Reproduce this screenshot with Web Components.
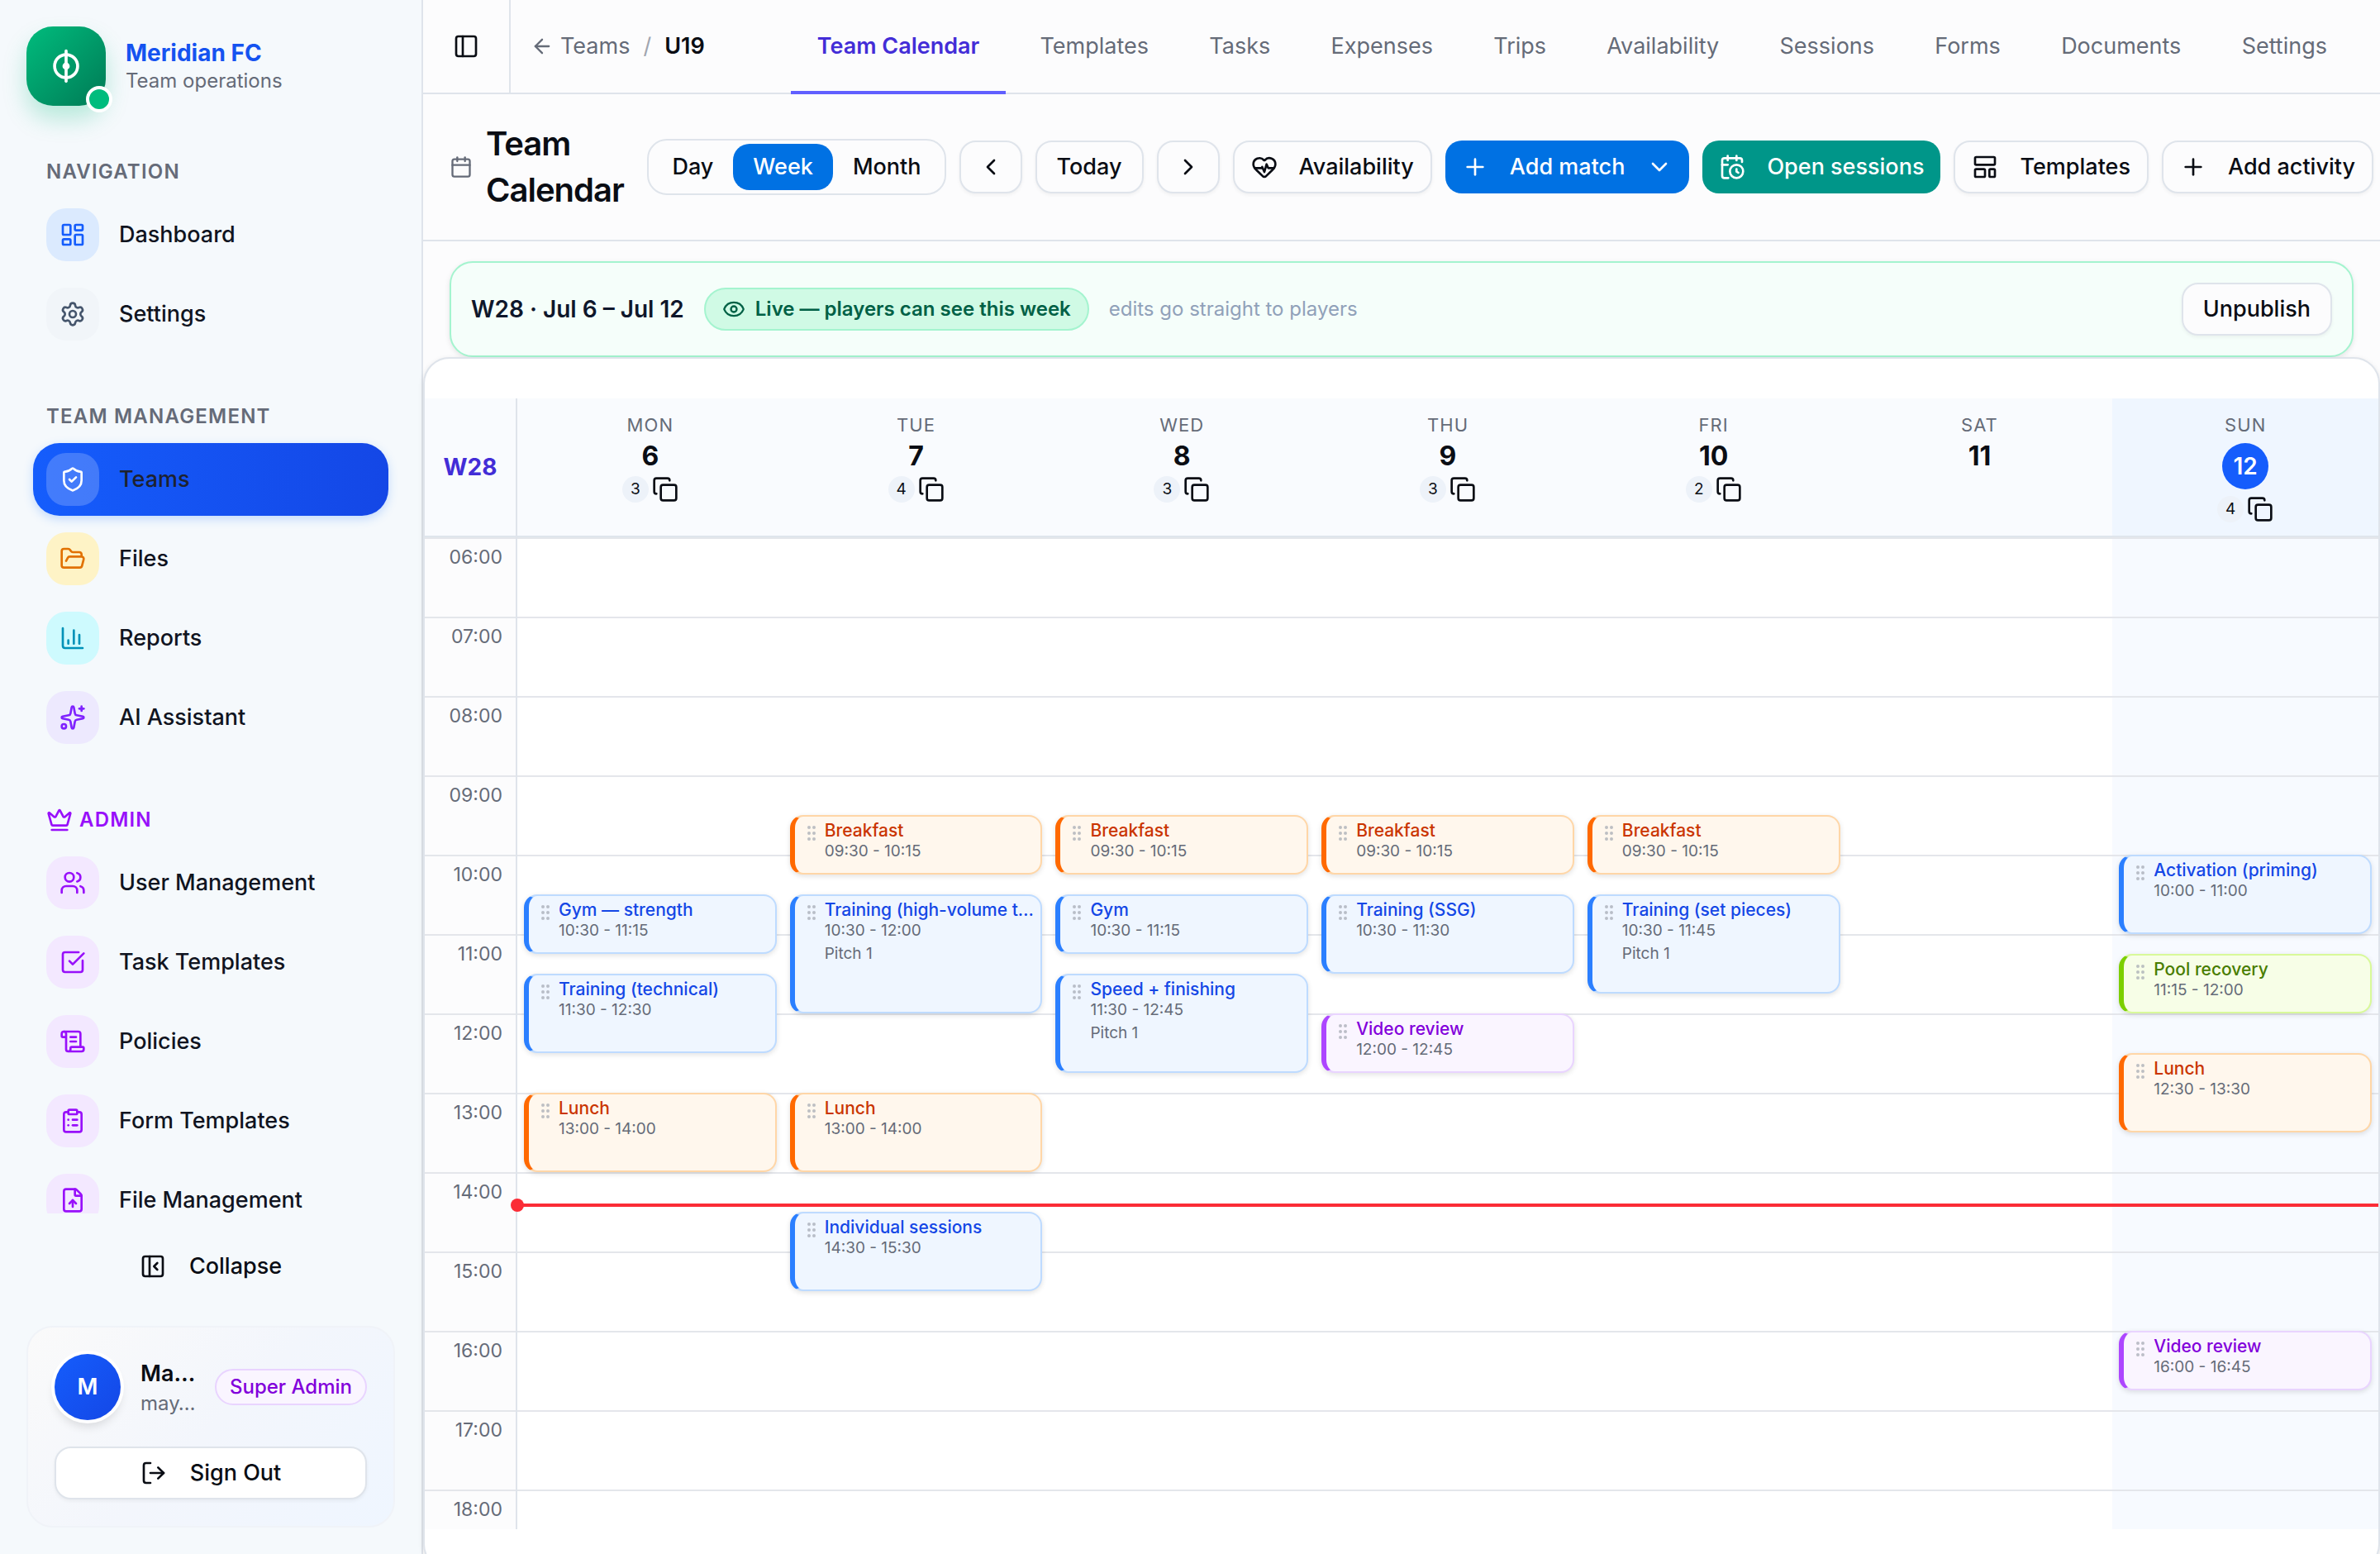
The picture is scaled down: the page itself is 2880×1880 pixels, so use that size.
<!DOCTYPE html>
<html lang="en">
<head>
<meta charset="utf-8">
<title>Team Calendar</title>
<style>
  :root {
    --fg: #0a0d14;
    --muted: #656b78;
    --border: #dfe4eb;
    --line: #e4e6eb;
    --page: #fcfcfd;
    --blue: #155dfc;
    --indigo: #432dd7;
  }

  body {
    margin: 0;
    color: var(--fg);
    background: var(--page);
    font-family: Inter, "Liberation Sans", sans-serif;
    font-size: 27px;
    line-height: 40px;
    font-optical-sizing: none;
  }
</style>
</head>
<body>
<team-app></team-app>

<script>
const icons = {
  dashboard: '<rect width="7" height="9" x="3" y="3" rx="1"/><rect width="7" height="5" x="14" y="3" rx="1"/><rect width="7" height="9" x="14" y="12" rx="1"/><rect width="7" height="5" x="3" y="16" rx="1"/>',
  settings: '<path d="M9.671 4.136a2.34 2.34 0 0 1 4.659 0 2.34 2.34 0 0 0 3.319 1.915 2.34 2.34 0 0 1 2.33 4.033 2.34 2.34 0 0 0 0 3.831 2.34 2.34 0 0 1-2.33 4.033 2.34 2.34 0 0 0-3.319 1.915 2.34 2.34 0 0 1-4.659 0 2.34 2.34 0 0 0-3.32-1.915 2.34 2.34 0 0 1-2.33-4.033 2.34 2.34 0 0 0 0-3.831A2.34 2.34 0 0 1 6.35 6.051a2.34 2.34 0 0 0 3.319-1.915"/><circle cx="12" cy="12" r="3"/>',
  shield: '<path d="M20 13c0 5-3.5 7.5-7.66 8.95a1 1 0 0 1-.67-.01C7.5 20.5 4 18 4 13V6a1 1 0 0 1 1-1c2 0 4.5-1.2 6.24-2.72a1.17 1.17 0 0 1 1.52 0C14.51 3.81 17 5 19 5a1 1 0 0 1 1 1z"/><path d="m9 12 2 2 4-4"/>',
  folder: '<path d="m6 14 1.5-2.9A2 2 0 0 1 9.24 10H20a2 2 0 0 1 1.94 2.5l-1.54 6a2 2 0 0 1-1.95 1.5H4a2 2 0 0 1-2-2V5a2 2 0 0 1 2-2h3.9a2 2 0 0 1 1.69.9l.81 1.2a2 2 0 0 0 1.67.9H18a2 2 0 0 1 2 2v2"/>',
  chart: '<path d="M3 3v16a2 2 0 0 0 2 2h16"/><path d="M18 17V9"/><path d="M13 17V5"/><path d="M8 17v-3"/>',
  sparkles: '<path d="M11.017 2.814a1 1 0 0 1 1.966 0l1.051 5.558a2 2 0 0 0 1.594 1.594l5.558 1.051a1 1 0 0 1 0 1.966l-5.558 1.051a2 2 0 0 0-1.594 1.594l-1.051 5.558a1 1 0 0 1-1.966 0l-1.051-5.558a2 2 0 0 0-1.594-1.594l-5.558-1.051a1 1 0 0 1 0-1.966l5.558-1.051a2 2 0 0 0 1.594-1.594z"/><path d="M20 2v4"/><path d="M22 4h-4"/><circle cx="4" cy="20" r="2"/>',
  crown: '<path d="M11.562 3.266a.5.5 0 0 1 .876 0L15.39 8.87a1 1 0 0 0 1.516.294L21.183 5.5a.5.5 0 0 1 .798.519l-2.834 10.246a1 1 0 0 1-.956.734H5.81a1 1 0 0 1-.957-.734L2.02 6.02a.5.5 0 0 1 .798-.519l4.276 3.664a1 1 0 0 0 1.516-.294z"/><path d="M5 21h14"/>',
  users: '<path d="M16 21v-2a4 4 0 0 0-4-4H6a4 4 0 0 0-4 4v2"/><circle cx="9" cy="7" r="4"/><path d="M22 21v-2a4 4 0 0 0-3-3.87"/><path d="M16 3.13a4 4 0 0 1 0 7.75"/>',
  check: '<path d="M21 10.656V19a2 2 0 0 1-2 2H5a2 2 0 0 1-2-2V5a2 2 0 0 1 2-2h12.344"/><path d="m9 11 3 3L22 4"/>',
  scroll: '<path d="M15 12h-5"/><path d="M15 8h-5"/><path d="M19 17V5a2 2 0 0 0-2-2H4"/><path d="M8 21h12a2 2 0 0 0 2-2v-1a1 1 0 0 0-1-1H11a1 1 0 0 0-1 1v1a2 2 0 1 1-4 0V5a2 2 0 1 0-4 0v2a1 1 0 0 0 1 1h3"/>',
  clipboard: '<rect width="8" height="4" x="8" y="2" rx="1"/><path d="M16 4h2a2 2 0 0 1 2 2v14a2 2 0 0 1-2 2H6a2 2 0 0 1-2-2V6a2 2 0 0 1 2-2h2"/><path d="M12 11h4"/><path d="M12 16h4"/><path d="M8 11h.01"/><path d="M8 16h.01"/>',
  fileup: '<path d="M6 22a2 2 0 0 1-2-2V4a2 2 0 0 1 2-2h8a2.4 2.4 0 0 1 1.704.706l3.588 3.588A2.4 2.4 0 0 1 20 8v12a2 2 0 0 1-2 2z"/><path d="M14 2v5a1 1 0 0 0 1 1h5"/><path d="M12 12v6"/><path d="m15 15-3-3-3 3"/>',
  collapse: '<rect width="18" height="18" x="3" y="3" rx="2"/><path d="M9 3v18"/><path d="m16 15-3-3 3-3"/>',
  panel: '<rect width="18" height="18" x="3" y="3" rx="2"/><path d="M9 3v18"/>',
  logout: '<path d="m16 17 5-5-5-5"/><path d="M21 12H9"/><path d="M9 21H5a2 2 0 0 1-2-2V5a2 2 0 0 1 2-2h4"/>',
  back: '<path d="m12 19-7-7 7-7"/><path d="M19 12H5"/>',
  calendar: '<path d="M8 2v4"/><path d="M16 2v4"/><rect width="18" height="18" x="3" y="4" rx="2"/><path d="M3 10h18"/>',
  left: '<path d="m15 18-6-6 6-6"/>',
  right: '<path d="m9 18 6-6-6-6"/>',
  down: '<path d="m6 9 6 6 6-6"/>',
  plus: '<path d="M5 12h14"/><path d="M12 5v14"/>',
  heart: '<path d="M2 9.5a5.5 5.5 0 0 1 9.591-3.676.56.56 0 0 0 .818 0A5.49 5.49 0 0 1 22 9.5c0 2.29-1.5 4-3 5.5l-5.492 5.313a2 2 0 0 1-3 .019L5 15c-1.5-1.5-3-3.2-3-5.5"/><path d="M3.22 13H9.5l.5-1 2 4.5 2-7 1.5 3.5h5.27"/>',
  clock: '<path d="M16 14v2.2l1.6 1"/><path d="M16 2v4"/><path d="M21 7.5V6a2 2 0 0 0-2-2H5a2 2 0 0 0-2 2v14a2 2 0 0 0 2 2h3.5"/><path d="M3 10h5"/><path d="M8 2v4"/><circle cx="16" cy="16" r="6"/>',
  template: '<rect width="18" height="7" x="3" y="3" rx="1"/><rect width="9" height="7" x="3" y="14" rx="1"/><rect width="5" height="7" x="16" y="14" rx="1"/>',
  eye: '<path d="M2.062 12.348a1 1 0 0 1 0-.696 10.75 10.75 0 0 1 19.876 0 1 1 0 0 1 0 .696 10.75 10.75 0 0 1-19.876 0"/><circle cx="12" cy="12" r="3"/>',
  copy: '<rect width="14" height="14" x="8" y="8" rx="2"/><path d="M4 16c-1.1 0-2-.9-2-2V4c0-1.1.9-2 2-2h10c1.1 0 2 .9 2 2"/>',
  grip: '<circle cx="9" cy="12" r="1"/><circle cx="9" cy="5" r="1"/><circle cx="9" cy="19" r="1"/><circle cx="15" cy="12" r="1"/><circle cx="15" cy="5" r="1"/><circle cx="15" cy="19" r="1"/>',
  ball: '<circle cx="12" cy="12" r="7.6"/><path d="M12 2v20"/><circle cx="12" cy="12" r="1.4" fill="currentColor"/>',
};

class UiIcon extends HTMLElement {
  constructor() {
    super();
    this.attachShadow({ mode: 'open' });
  }

  connectedCallback() {
    this.shadowRoot.innerHTML = `
      <style>
        :host { display: block; flex: none; width: 32px; height: 32px; }
        :host([size="24"]) { width: 24px; height: 24px; }
        :host([size="28"]) { width: 28px; height: 28px; }
        :host([size="44"]) { width: 44px; height: 44px; }
        svg { display: block; width: 100%; height: 100%; }
      </style>
      <svg viewBox="0 0 24 24" fill="none" stroke="currentColor" stroke-width="2" stroke-linecap="round" stroke-linejoin="round" aria-hidden="true">${icons[this.getAttribute('name')]}</svg>
    `;
  }
}

customElements.define('ui-icon', UiIcon);

class UiButton extends HTMLElement {
  constructor() {
    super();
    this.attachShadow({ mode: 'open' });
  }

  connectedCallback() {
    const icon = this.getAttribute('icon');
    const trail = this.getAttribute('trail');
    const label = this.getAttribute('label');

    this.shadowRoot.innerHTML = `
      <style>
        :host { display: block; flex: none; }
        button {
          box-sizing: border-box;
          display: flex;
          align-items: center;
          justify-content: center;
          gap: 26px;
          width: 100%;
          height: 64px;
          padding: 0 24px;
          border: 2px solid var(--border);
          border-radius: 20px;
          background: var(--page);
          box-shadow: 0 2px 4px rgba(0, 0, 0, 0.05);
          color: inherit;
          font: inherit;
          font-weight: 500;
          font-optical-sizing: inherit;
          white-space: nowrap;
        }
        :host([icon]) button { padding: 0 20px; }
        :host([tone]) button { color: #fff; padding: 0 20px; border: 0; box-shadow: none; }
        :host([tone="blue"]) button { background: #0071e3; }
        :host([tone="teal"]) button { background: #009689; }
        :host([tone="plain"]) button { color: inherit; background: none; }
        :host([tone="plain"]) button, :host([wide]) button { gap: 28px; }
        :host([wide]) button { background: #fff; }
      </style>
      <button type="button"${label ? ` aria-label="${label}"` : ''}>
        ${icon ? `<ui-icon name="${icon}"></ui-icon>` : ''}
        ${label ? '' : '<span><slot></slot></span>'}
        ${trail ? `<ui-icon name="${trail}"></ui-icon>` : ''}
      </button>
    `;
  }
}

customElements.define('ui-button', UiButton);

class NavGroup extends HTMLElement {
  constructor() {
    super();
    this.attachShadow({ mode: 'open' });
  }

  connectedCallback() {
    const icon = this.getAttribute('icon');

    this.shadowRoot.innerHTML = `
      <style>
        :host { display: block; }
        h2 {
          display: flex;
          align-items: center;
          gap: 8px;
          height: 64px;
          margin: 0;
          padding: 0 16px;
          color: var(--muted);
          font-size: 24px;
          font-weight: 600;
          line-height: 32px;
          letter-spacing: 0.05em;
          text-transform: uppercase;
        }
        :host([icon]) h2 { color: #9810fa; }
        .items { display: grid; gap: 8px; }
      </style>
      <h2>${icon ? `<ui-icon name="${icon}"></ui-icon>` : ''}${this.getAttribute('heading')}</h2>
      <div class="items"><slot></slot></div>
    `;
  }
}

customElements.define('nav-group', NavGroup);

class NavItem extends HTMLElement {
  constructor() {
    super();
    this.attachShadow({ mode: 'open' });
  }

  connectedCallback() {
    this.shadowRoot.innerHTML = `
      <style>
        :host { display: block; --tile: #f3e8ff; --ink: #9810fa; }
        :host([tone="blue"]) { --tile: #dbeafe; --ink: #155dfc; }
        :host([tone="slate"]) { --tile: #f1f5f9; --ink: #45556c; }
        :host([tone="amber"]) { --tile: #fef3c6; --ink: #e17100; }
        :host([tone="cyan"]) { --tile: #cefafe; --ink: #0092b8; }
        :host([tone="violet"]) { --tile: #ede9fe; --ink: #7f22fe; }
        :host([active]) { --tile: rgba(255, 255, 255, 0.2); --ink: #fff; }
        a {
          display: flex;
          align-items: center;
          gap: 24px;
          height: 88px;
          padding: 0 16px;
          border-radius: 32px;
          color: #10141f;
          font-weight: 500;
          text-decoration: none;
        }
        :host([active]) a {
          color: #1d2230;
          background: linear-gradient(90deg, #155dfc, #1447e6);
          box-shadow: 0 4px 12px rgba(43, 127, 255, 0.25);
        }
        .tile {
          display: grid;
          place-items: center;
          width: 64px;
          height: 64px;
          border-radius: 24px;
          color: var(--ink);
          background: var(--tile);
        }
      </style>
      <a href="#"><span class="tile"><ui-icon name="${this.getAttribute('icon')}"></ui-icon></span><slot></slot></a>
    `;
  }
}

customElements.define('nav-item', NavItem);

const sidebarTemplate = document.createElement('template');
sidebarTemplate.innerHTML = `
  <style>
    :host {
      box-sizing: border-box;
      display: flex;
      flex-direction: column;
      height: 100vh;
      border-right: 2px solid var(--border);
      background: #f5f9fc;
    }
    header {
      display: flex;
      align-items: center;
      gap: 24px;
      padding: 32px 32px 48px;
    }
    .logo {
      position: relative;
      display: grid;
      place-items: center;
      width: 96px;
      height: 96px;
      border-radius: 32px;
      color: #fff;
      background: linear-gradient(135deg, #00bc7d, #007a55);
      box-shadow: 0 16px 28px rgba(0, 188, 125, 0.25);
    }
    .status {
      position: absolute;
      right: -8px;
      bottom: -8px;
      width: 24px;
      height: 24px;
      border: 4px solid #fff;
      border-radius: 50%;
      background: #00bc7d;
    }
    .brand {
      color: #1553f0;
      font-size: 28px;
      font-weight: 700;
      line-height: 36px;
    }
    .sub {
      color: var(--muted);
      font-size: 24px;
      line-height: 32px;
    }
    nav {
      flex: 1;
      display: flex;
      flex-direction: column;
      gap: 48px;
      min-height: 0;
      overflow: hidden;
      padding: 0 40px;
    }
    footer { padding: 32px; }
    .user {
      margin-top: 40px;
      padding: 32px;
      border: 2px solid #f0f3f8;
      border-radius: 32px;
      background: linear-gradient(135deg, #fafafa, #f3f6fc 50%, #eff6ff);
    }
    .who {
      display: flex;
      align-items: center;
      gap: 24px;
      margin-bottom: 32px;
    }
    .avatar {
      flex: none;
      display: grid;
      place-items: center;
      width: 80px;
      height: 80px;
      border-radius: 50%;
      color: #fff;
      background: linear-gradient(135deg, #155dfc, #1447e6);
      box-shadow: 0 0 0 4px #fff, 0 8px 12px rgba(0, 0, 0, 0.12);
      font-weight: 600;
    }
    .name {
      flex: 1;
      min-width: 0;
      font-weight: 600;
      white-space: nowrap;
    }
    .role {
      flex: none;
      padding: 4px 16px;
      border: 2px solid #e9d4ff;
      border-radius: 24px;
      color: #8200db;
      background: #faf5ff;
      font-size: 24px;
      font-weight: 500;
      line-height: 32px;
      white-space: nowrap;
    }
    .name .sub { font-weight: 400; }
  </style>

  <header>
    <div class="logo"><ui-icon name="ball" size="44"></ui-icon><span class="status"></span></div>
    <div>
      <div class="brand">Meridian FC</div>
      <div class="sub">Team operations</div>
    </div>
  </header>
  <nav>
    <nav-group heading="Navigation">
      <nav-item icon="dashboard" tone="blue">Dashboard</nav-item>
      <nav-item icon="settings" tone="slate">Settings</nav-item>
    </nav-group>
    <nav-group heading="Team Management">
      <nav-item icon="shield" active>Teams</nav-item>
      <nav-item icon="folder" tone="amber">Files</nav-item>
      <nav-item icon="chart" tone="cyan">Reports</nav-item>
      <nav-item icon="sparkles" tone="violet">AI Assistant</nav-item>
    </nav-group>
    <nav-group heading="Admin" icon="crown">
      <nav-item icon="users">User Management</nav-item>
      <nav-item icon="check">Task Templates</nav-item>
      <nav-item icon="scroll">Policies</nav-item>
      <nav-item icon="clipboard">Form Templates</nav-item>
      <nav-item icon="fileup">File Management</nav-item>
    </nav-group>
  </nav>
  <footer>
    <ui-button icon="collapse" tone="plain">Collapse</ui-button>
    <div class="user">
      <div class="who">
        <span class="avatar">M</span>
        <div class="name">Ma…<div class="sub">may…</div></div>
        <span class="role">Super Admin</span>
      </div>
      <ui-button icon="logout" wide>Sign Out</ui-button>
    </div>
  </footer>
`;

class TeamSidebar extends HTMLElement {
  constructor() {
    super();
    const shadow = this.attachShadow({ mode: 'open' });
    shadow.appendChild(sidebarTemplate.content.cloneNode(true));
  }
}

customElements.define('team-sidebar', TeamSidebar);

const tabs = ['Team Calendar', 'Templates', 'Tasks', 'Expenses', 'Trips', 'Availability', 'Sessions', 'Forms', 'Documents', 'Settings'];

class TeamTabs extends HTMLElement {
  constructor() {
    super();
    this.attachShadow({ mode: 'open' }).innerHTML = `
      <style>
        :host {
          display: flex;
          height: 112px;
          border-bottom: 2px solid var(--border);
          white-space: nowrap;
        }
        .toggle {
          display: grid;
          place-items: center;
          width: 106px;
          padding: 0;
          border: 0;
          border-right: 2px solid var(--border);
          background: none;
          color: inherit;
        }
        .crumbs {
          display: flex;
          align-items: center;
          gap: 16px;
          padding: 0 72px 0 24px;
          color: var(--muted);
        }
        .crumbs a {
          display: flex;
          align-items: center;
          gap: 8px;
          color: inherit;
          text-decoration: none;
        }
        .crumbs b { color: var(--fg); font-weight: 600; }
        .slash { color: #a0a5af; }
        nav {
          flex: 1;
          display: flex;
          justify-content: space-between;
          padding: 0 32px;
        }
        nav a {
          display: flex;
          align-items: center;
          padding: 0 32px;
          color: var(--muted);
          text-decoration: none;
        }
        /* the underline covers the header's border */
        nav a[aria-current] {
          margin-bottom: -2px;
          padding-bottom: 2px;
          color: var(--indigo);
          font-weight: 600;
          box-shadow: inset 0 -4px #615fff;
        }
      </style>
      <button class="toggle" type="button" aria-label="Toggle sidebar"><ui-icon name="panel"></ui-icon></button>
      <div class="crumbs">
        <a href="#"><ui-icon name="back" size="28"></ui-icon>Teams</a>
        <span class="slash">/</span>
        <b>U19</b>
      </div>
      <nav>${tabs.map((tab, i) => `<a href="#"${i ? '' : ' aria-current="page"'}>${tab}</a>`).join('')}</nav>
    `;
  }
}

customElements.define('team-tabs', TeamTabs);

const toolbarTemplate = document.createElement('template');
toolbarTemplate.innerHTML = `
  <style>
    :host {
      display: flex;
      align-items: center;
      gap: 16px;
      padding: 32px 8px 32px 32px;
      border-bottom: 2px solid var(--border);
    }
    .title {
      flex: 1;
      display: flex;
      align-items: center;
      gap: 16px;
      min-width: 0;
    }
    .title ui-icon { color: var(--muted); }
    h1 {
      flex: 0 1 180px;
      margin: 0;
      font-size: 40px;
      font-weight: 600;
      line-height: 56px;
      letter-spacing: -0.025em;
    }
    .views {
      display: flex;
      padding: 4px;
      border: 2px solid var(--border);
      border-radius: 24px;
    }
    .views button {
      height: 56px;
      padding: 0 24px;
      border: 0;
      border-radius: 20px;
      color: inherit;
      background: none;
      font: inherit;
      font-weight: 500;
      font-optical-sizing: inherit;
    }
    .views button[aria-pressed="true"] {
      color: #fff;
      background: #0071e3;
    }
  </style>

  <div class="title">
    <ui-icon name="calendar" size="28"></ui-icon>
    <h1>Team Calendar</h1>
  </div>
  <div class="views" role="group" aria-label="View">
    <button type="button">Day</button>
    <button type="button" aria-pressed="true">Week</button>
    <button type="button">Month</button>
  </div>
  <ui-button icon="left" label="Previous week"></ui-button>
  <ui-button>Today</ui-button>
  <ui-button icon="right" label="Next week"></ui-button>
  <ui-button icon="heart">Availability</ui-button>
  <ui-button icon="plus" trail="down" tone="blue">Add match</ui-button>
  <ui-button icon="clock" tone="teal">Open sessions</ui-button>
  <ui-button icon="template">Templates</ui-button>
  <ui-button icon="plus">Add activity</ui-button>
`;

class CalendarToolbar extends HTMLElement {
  constructor() {
    super();
    const shadow = this.attachShadow({ mode: 'open' });
    shadow.appendChild(toolbarTemplate.content.cloneNode(true));
  }
}

customElements.define('calendar-toolbar', CalendarToolbar);

const bannerTemplate = document.createElement('template');
bannerTemplate.innerHTML = `
  <style>
    :host {
      display: flex;
      align-items: center;
      gap: 24px;
      margin: 24px 32px 0;
      padding: 24px;
      border: 2px solid #a4f4cf;
      border-radius: 28px;
      background: #f5fefa;
      box-shadow: 0 2px 6px rgba(0, 0, 0, 0.1);
    }
    strong {
      color: #0f172b;
      font-size: 28px;
      font-weight: 600;
    }
    .live {
      display: flex;
      align-items: center;
      gap: 12px;
      padding: 8px 20px;
      border: 2px solid #a4f4cf;
      border-radius: 26px;
      color: #006045;
      background: #d0fae5;
      font-size: 24px;
      font-weight: 600;
      line-height: 32px;
    }
    .hint {
      flex: 1;
      color: #90a1b9;
      font-size: 24px;
    }
  </style>

  <strong>W28 · Jul 6 – Jul 12</strong>
  <span class="live"><ui-icon name="eye" size="28"></ui-icon>Live — players can see this week</span>
  <span class="hint">edits go straight to players</span>
  <ui-button>Unpublish</ui-button>
`;

class WeekBanner extends HTMLElement {
  constructor() {
    super();
    const shadow = this.attachShadow({ mode: 'open' });
    shadow.appendChild(bannerTemplate.content.cloneNode(true));
  }
}

customElements.define('week-banner', WeekBanner);

class CalendarEvent extends HTMLElement {
  constructor() {
    super();
    this.attachShadow({ mode: 'open' });
  }

  connectedCallback() {
    const place = this.getAttribute('place');

    this.shadowRoot.innerHTML = `
      <style>
        :host {
          --bg: #eff6ff; --edge: #bedbff; --bar: #2b7fff; --ink: #1447e6;
          box-sizing: border-box;
          display: flex;
          gap: 4px;
          padding: 4px 8px;
          overflow: hidden;
          border: 2px solid var(--edge);
          border-left: 6px solid var(--bar);
          border-radius: 16px;
          background: var(--bg);
          box-shadow: 0 2px 6px rgba(0, 0, 0, 0.12);
          color: var(--muted);
          font-size: 19px;
          line-height: 24px;
          white-space: nowrap;
        }
        :host([kind="meal"]) { --bg: #fff7ed; --edge: #ffd6a7; --bar: #ff6900; --ink: #ca3500; }
        :host([kind="video"]) { --bg: #faf5ff; --edge: #e9d4ff; --bar: #ad46ff; --ink: #8200db; }
        :host([kind="recovery"]) { --bg: #f7fee7; --edge: #d8f999; --bar: #7ccf00; --ink: #497d00; }
        ui-icon { margin-top: 4px; color: #a2a7b1; opacity: 0.7; }
        .title {
          color: var(--ink);
          font-size: 21px;
          font-weight: 500;
          line-height: 26px;
        }
        .place { margin-top: 4px; }
      </style>
      <ui-icon name="grip" size="24"></ui-icon>
      <div>
        <div class="title"><slot></slot></div>
        <div>${this.getAttribute('from')} - ${this.getAttribute('to')}</div>
        ${place ? `<div class="place">${place}</div>` : ''}
      </div>
    `;
  }
}

customElements.define('calendar-event', CalendarEvent);

const breakfast = ['meal', 'Breakfast', '09:30', '10:15'];
const week = [
  { day: 'Mon', date: 6, events: [
    ['training', 'Gym — strength', '10:30', '11:15'],
    ['training', 'Training (technical)', '11:30', '12:30'],
    ['meal', 'Lunch', '13:00', '14:00'],
  ] },
  { day: 'Tue', date: 7, events: [
    breakfast,
    ['training', 'Training (high-volume t…', '10:30', '12:00', 'Pitch 1'],
    ['meal', 'Lunch', '13:00', '14:00'],
    ['training', 'Individual sessions', '14:30', '15:30'],
  ] },
  { day: 'Wed', date: 8, events: [
    breakfast,
    ['training', 'Gym', '10:30', '11:15'],
    ['training', 'Speed + finishing', '11:30', '12:45', 'Pitch 1'],
  ] },
  { day: 'Thu', date: 9, events: [
    breakfast,
    ['training', 'Training (SSG)', '10:30', '11:30'],
    ['video', 'Video review', '12:00', '12:45'],
  ] },
  { day: 'Fri', date: 10, events: [
    breakfast,
    ['training', 'Training (set pieces)', '10:30', '11:45', 'Pitch 1'],
  ] },
  { day: 'Sat', date: 11, events: [] },
  { day: 'Sun', date: 12, today: true, events: [
    ['training', 'Activation (priming)', '10:00', '11:00'],
    ['recovery', 'Pool recovery', '11:15', '12:00'],
    ['meal', 'Lunch', '12:30', '13:30'],
    ['video', 'Video review', '16:00', '16:45'],
  ] },
];

const firstHour = 6;
const lastHour = 18;
// grid rows are five minutes each
const row = (time) => {
  const [h, m] = time.split(':').map(Number);
  return (h - firstHour) * 12 + m / 5 + 1;
};
const hours = Array.from({ length: lastHour - firstHour + 1 }, (_, i) => `${String(firstHour + i).padStart(2, '0')}:00`);

class WeekCalendar extends HTMLElement {
  constructor() {
    super();
    this.attachShadow({ mode: 'open' });
  }

  connectedCallback() {
    this.shadowRoot.innerHTML = `
      <style>
        :host {
          display: flex;
          flex-direction: column;
          min-height: 0;
          padding: 48px 0;
          border: 2px solid var(--border);
          border-radius: 32px;
          background: #fff;
          box-shadow: 0 2px 6px rgba(0, 0, 0, 0.1);
        }
        .head, .body {
          display: grid;
          grid-template-columns: 112px repeat(7, 1fr);
        }
        .head {
          flex: none;
          border-bottom: 2px solid #dfe5ec;
          background: #f9fbfe;
        }
        .week, .hours { border-right: 2px solid var(--border); }
        .week {
          display: grid;
          place-items: center;
          color: var(--indigo);
          font-size: 28px;
          font-weight: 700;
        }
        .day {
          display: flex;
          flex-direction: column;
          align-items: center;
          padding: 16px 0;
        }
        .day.today { background: #eff6ff; }
        .name {
          color: var(--muted);
          font-size: 22px;
          line-height: 32px;
          letter-spacing: 0.05em;
          text-transform: uppercase;
        }
        .date {
          margin: 6px 0 8px;
          font-size: 32px;
          font-weight: 700;
          line-height: 32px;
        }
        .today .date {
          width: 56px;
          border-radius: 50%;
          color: #fff;
          background: var(--blue);
          font-size: 28px;
          font-weight: 600;
          line-height: 56px;
          text-align: center;
        }
        .tools { display: flex; gap: 4px; }
        .count {
          width: 32px;
          border-radius: 50%;
          background: #edf2f9;
          font-size: 19px;
          line-height: 32px;
          text-align: center;
        }
        .copy { padding: 0; border: 0; background: none; color: inherit; }
        .scroll {
          flex: 1;
          min-height: 0;
          overflow: hidden;
        }
        .body { position: relative; }
        .hours {
          display: grid;
          grid-auto-rows: 96px;
          background: var(--page);
          color: var(--muted);
          font-size: 23px;
          line-height: 32px;
          text-align: right;
        }
        .hours span {
          padding: 6px 16px 0 0;
          border-top: 2px solid var(--line);
        }
        .column {
          display: grid;
          grid-template-rows: repeat(${hours.length * 12}, 8px);
          padding: 0 8px;
          background: repeating-linear-gradient(var(--line) 0 2px, transparent 2px 96px);
        }
        .column.today { background-color: #f7faff; }
        calendar-event { min-width: 0; }
        .now {
          position: absolute;
          inset: 806px 0 auto 112px;
          height: 4px;
          background: #fb2c36;
        }
        .now::before {
          content: "";
          position: absolute;
          left: -8px;
          top: -6px;
          width: 16px;
          height: 16px;
          border-radius: 50%;
          background: inherit;
        }
      </style>
      <div class="head">
        <div class="week">W28</div>
        ${week.map(({ day, date, today, events }) => `
          <div class="day${today ? ' today' : ''}">
            <span class="name">${day}</span>
            <span class="date">${date}</span>
            ${events.length ? `
              <div class="tools">
                <span class="count">${events.length}</span>
                <button class="copy" type="button" aria-label="Copy day"><ui-icon name="copy"></ui-icon></button>
              </div>` : ''}
          </div>
        `).join('')}
      </div>
      <div class="scroll">
        <div class="body">
          <div class="hours">${hours.map((hour) => `<span>${hour}</span>`).join('')}</div>
          ${week.map(({ today, events }) => `
            <div class="column${today ? ' today' : ''}">
              ${events.map(([kind, title, from, to, place]) => `
                <calendar-event kind="${kind}" from="${from}" to="${to}"${place ? ` place="${place}"` : ''} style="grid-area: ${row(from)} / 1 / ${row(to)} / 2">${title}</calendar-event>
              `).join('')}
            </div>
          `).join('')}
          <div class="now"></div>
        </div>
      </div>
    `;
  }
}

customElements.define('week-calendar', WeekCalendar);

class TeamApp extends HTMLElement {
  constructor() {
    super();
    this.attachShadow({ mode: 'open' }).innerHTML = `
      <style>
        :host {
          display: grid;
          grid-template-columns: 512px minmax(0, 1fr);
          height: 100vh;
          overflow: hidden;
        }
        main {
          display: flex;
          flex-direction: column;
          height: 100vh;
        }
        team-tabs, calendar-toolbar, week-banner { flex: none; }
        /* the card's lower edge runs under the fold */
        week-calendar { flex: 1; margin-bottom: -20px; }
      </style>
      <team-sidebar></team-sidebar>
      <main>
        <team-tabs></team-tabs>
        <calendar-toolbar></calendar-toolbar>
        <week-banner></week-banner>
        <week-calendar></week-calendar>
      </main>
    `;
  }
}

customElements.define('team-app', TeamApp);
</script>
</body>
</html>
